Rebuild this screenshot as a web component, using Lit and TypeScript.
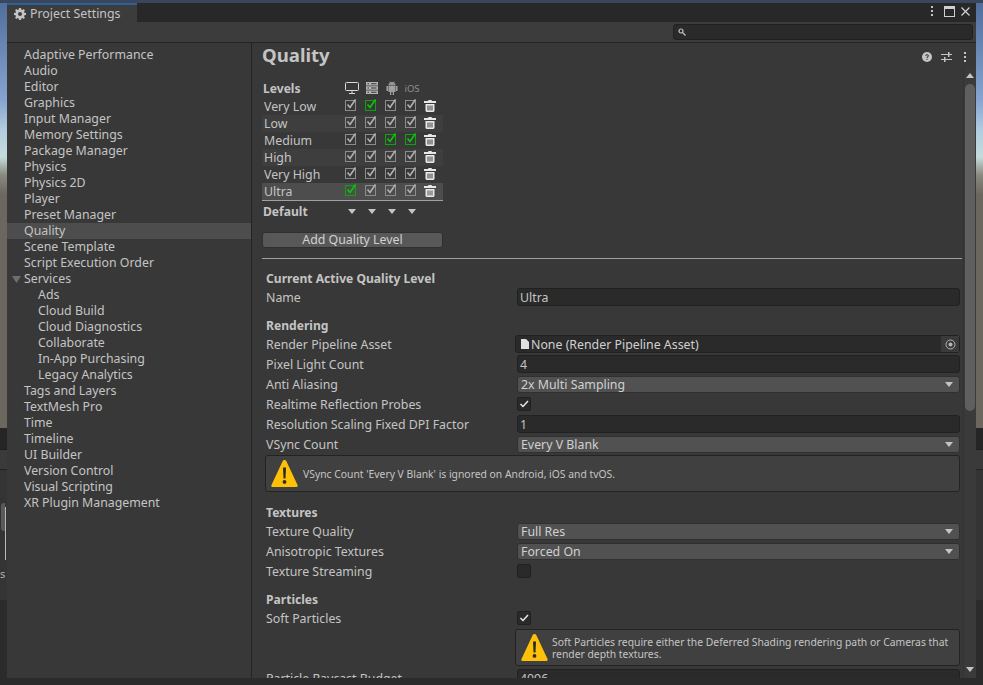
import { LitElement, html, css } from "lit";
import { customElement } from "lit/decorators.js";

const gear = html`<svg class="gear" viewBox="0 0 12 12" width="12" height="12"><path fill="#c4c4c4" fill-rule="evenodd" d="M5 0h2l.3 1.600 1 .4L9.700 1.100l1.200 1.200-.9 1.400.4 1 1.600.3v2l-1.600.3-.4 1 .9 1.400-1.200 1.200-1.400-.9-1 .4L7 12H5l-.3-1.600-1-.4-1.400.9-1.200-1.200.9-1.400-.4-1L0 7V5l1.600-.3.4-1-.9-1.400 1.200-1.200 1.400.9 1-.4zM6 4a2 2 0 1 0 0 4 2 2 0 0 0 0-4z"/></svg>`;

const dots = html`<svg viewBox="0 0 4 12" width="4" height="12"><g fill="#c4c4c4"><rect x="1" y="1" width="2" height="2"/><rect x="1" y="5" width="2" height="2"/><rect x="1" y="9" width="2" height="2"/></g></svg>`;

const check = (green: boolean) => html`<span class="lv-check ${green ? "green" : ""}"><svg viewBox="0 0 11 11" width="11" height="11"><path d="M2.500 5.500l2.500 3L10.500 .5" fill="none" stroke="${green ? "#0ec40e" : "#b0b0b0"}" stroke-width="1.600"/></svg></span>`;

const trash = html`<svg class="trash" viewBox="0 0 12 12" width="12" height="12"><path fill="#e8e8e8" fill-rule="evenodd" d="M4.500 0h3l.5 1h4v2H0V1h4zM1.500 4h9v7l-1 1h-7l-1-1zM3.500 5.500v5h1v-5zm2 0v5h1v-5zm2 0v5h1v-5z"/></svg>`;

const tri = html`<svg class="tri" viewBox="0 0 8 5" width="8" height="5"><path d="M0 0h8L4 5z" fill="#c4c4c4"/></svg>`;

const warn = html`<svg class="warn" viewBox="0 0 27 27" width="27" height="27"><path d="M13.500 0c1 0 1.500.5 2 1.500l11 23.500c.5 1 0 2-1 2H1.500c-1 0-1.500-1-1-2l11-23.500c.5-1 1-1.500 2-1.500z" fill="#ffc107"/><path d="M12 7.500h3l-.5 11h-2zM13.500 20a1.900 1.900 0 1 1 0 3.800 1.900 1.900 0 0 1 0-3.800z" fill="#2a2a2a"/></svg>`;

const levels: [string, number[]][] = [
  ["Very Low", [1]],
  ["Low", []],
  ["Medium", [2, 3]],
  ["High", []],
  ["Very High", []],
  ["Ultra", [0]],
];

const items: [string, boolean?][] = [
  ["Adaptive Performance"], ["Audio"], ["Editor"], ["Graphics"], ["Input Manager"],
  ["Memory Settings"], ["Package Manager"], ["Physics"], ["Physics 2D"], ["Player"],
  ["Preset Manager"], ["Quality"], ["Scene Template"], ["Script Execution Order"], ["Services"],
  ["Ads", true], ["Cloud Build", true], ["Cloud Diagnostics", true], ["Collaborate", true],
  ["In-App Purchasing", true], ["Legacy Analytics", true], ["Tags and Layers"], ["TextMesh Pro"],
  ["Time"], ["Timeline"], ["UI Builder"], ["Version Control"], ["Visual Scripting"], ["XR Plugin Management"],
];

@customElement("app-root")
export class AppRoot extends LitElement {
  static styles = css`
    :host {
      display: block; width: 983px; height: 685px; box-sizing: border-box; overflow: hidden; position: relative;
      padding: 3px 7px 7px 7px;
      background:
        linear-gradient(#39465c, #39465c) 0 0 / 100% 3px no-repeat,
        linear-gradient(#4f6c9a 0, #85a5d0 100px, #b0cce0 130px, #c5dcdc 157px, #8a8a80 175px, #6b665e 195px, #6b665e 428px, #252525 428px, #252525 449px, #1f1f1f 449px, #1f1f1f 450px, #3a3a3a 450px, #3a3a3a 469px, #232323 469px, #232323 470px, #343434 470px, #343434 600px, #2b2b2b 600px);
      font-family: "Noto Sans", sans-serif; font-size: 12.35px; color: #c4c4c4;
    }
    .bg-knob { position: absolute; left: 1px; top: 503px; width: 4px; height: 28px; background: #5a5a5a; border-radius: 3px 0 0 3px; }
    .bg-line { position: absolute; left: 5px; top: 507px; width: 1px; height: 53px; background: #b8b8b8; }
    .bg-text { position: absolute; left: 0; top: 566px; width: 7px; overflow: hidden; font-size: 11px; line-height: 16px; color: #b0b0b0; }
    .win { height: 675px; display: flex; flex-direction: column; background: #383838; overflow: hidden; position: relative; }
    .title { height: 19px; flex: none; background: #282828; display: flex; align-items: stretch; }
    .tab { width: 130px; box-sizing: border-box; background: #3c3c3c; border-top: 2px solid #2d6099; display: flex; align-items: center; gap: 4px; padding: 0 0 0 7px; }
    .spacer { flex: 1; }
    .tbtns { display: flex; align-items: center; gap: 10px; padding: 0 6px 3px 0; }
    .tbtns .close { margin-left: -4px; }
    .tool { height: 20px; flex: none; background: #3c3c3c; border-bottom: 1px solid #232323; display: flex; justify-content: flex-end; align-items: center; padding: 0 3px 0 0; }
    .search { width: 300px; height: 16px; box-sizing: border-box; background: #2a2a2a; border: 1px solid #212121; border-radius: 3px; display: flex; align-items: center; padding-left: 4px; }
    .body { flex: 1; display: flex; min-height: 0; }
    .list { width: 245px; box-sizing: border-box; flex: none; border-right: 1px solid #232323; padding-top: 4px; }
    .item { height: 16px; line-height: 16px; padding-left: 17px; position: relative; white-space: nowrap; }
    .item.sub { padding-left: 31px; }
    .item.sel { background: #4d4d4d; }
    .exp { position: absolute; left: 5px; top: 5px; }
    .pane { flex: 1; display: flex; flex-direction: column; min-width: 0; min-height: 0; }
    .head { height: 26px; flex: none; display: flex; align-items: center; padding: 0 9px 0 10px; }
    h1 { font-size: 18.6px; font-weight: 700; margin: 0 0 2px; flex: 1; color: #c4c4c4; line-height: 24px; }
    .hicons { display: flex; align-items: center; gap: 9px; margin-top: 1px; }
    .hicons .more { margin-left: 2px; display: flex; }
    .pbody { flex: 1; display: flex; min-height: 0; }
    .main { width: 711px; flex: none; padding: 0 0 0 10px; box-sizing: border-box; overflow: hidden; }
    .levels { width: 181px; margin-top: 10px; }
    .lv-row { height: 17px; display: flex; align-items: center; padding-left: 2px; }
    .lv-row.odd { background: #3e3e3e; }
    .lv-row.cur { background: #4d4d4d; }
    .lv-name { width: 76px; flex: none; }
    .lv-head { height: 19px; box-sizing: border-box; padding: 0 0 1px 1px; display: flex; align-items: center; font-weight: 700; font-size: 12.1px; }
    .lv-head .nm { width: 79px; flex: none; }
    .plat { width: 20px; flex: none; display: flex; justify-content: center; align-items: center; }
    .ios { font-size: 9.5px; color: #8f8f8f; font-weight: 400; }
    .lv-check { width: 20px; flex: none; display: flex; justify-content: center; position: relative; height: 11px; margin-bottom: 2px; }
    .lv-check::before { content: ""; width: 9px; height: 9px; border: 1px solid #8c8c8c; box-sizing: content-box; }
    .lv-check.green::before { border-color: #0aa50a; }
    .lv-check svg { position: absolute; left: 5px; top: -1px; }
    .trash { margin: 0 0 2px 4px; flex: none; }
    .lv-def { border-top: 1px solid #a0a0a0; height: 21px; display: flex; align-items: center; font-weight: 700; font-size: 12.1px; padding-left: 1px; }
    .lv-def .nm { width: 79px; flex: none; }
    .add { margin-top: 10px; width: 181px; height: 16px; box-sizing: border-box; background: #585858; border: 1px solid #303030; border-radius: 3px; text-align: center; line-height: 14px; color: #d0d0d0; }
    .sep { height: 1px; background: #a0a0a0; margin: 10px 0 0 0; width: 700px; }
    .sec { font-weight: 700; font-size: 12.1px; height: 17px; line-height: 17px; padding-left: 4px; white-space: nowrap; margin-top: 10px; }
    .sec.first { margin-top: 11px; }
    .sec.after-help { margin-top: 12px; }
    .row { height: 20px; display: flex; align-items: center; padding-left: 4px; white-space: nowrap; }
    .lab { width: 251px; flex: none; }
    .field { width: 443px; height: 18px; box-sizing: border-box; background: #2a2a2a; border: 1px solid #212121; border-radius: 3px; padding: 1px 0 0 2px; line-height: 16px; display: flex; align-items: center; }
    .drop { width: 443px; background: #515151; border: 1px solid #303030; border-radius: 3px; height: 17px; box-sizing: border-box; display: flex; align-items: center; padding: 0 6px 0 3px; color: #d0d0d0; }
    .drop span { flex: 1; }
    .lab.wide { width: 249px; }
    .field.obj { width: 445px; padding: 0 0 0 5px; gap: 2px; color: #d0d0d0; }
    .obj span { flex: 1; padding-top: 1px; }
    .pick { width: 18px; height: 16px; background: #3a3a3a; display: flex; align-items: center; justify-content: center; }
    .cb { width: 14px; height: 14px; box-sizing: border-box; background: #2a2a2a; border: 1px solid #212121; border-radius: 2px; display: flex; align-items: center; justify-content: center; }
    .help { box-sizing: border-box; background: #404040; border: 1px solid #232323; border-radius: 3px; height: 37px; display: flex; align-items: center; gap: 5px; padding: 0 4px 0 5px; font-size: 10.35px; line-height: 12px; white-space: normal; }
    .help.full { margin: 1px 0 0 3px; width: 695px; }
    .help.half { margin: 1px 0 2px 253px; width: 445px; gap: 4px; }
    .warn { flex: none; }
    .scroll { width: 13px; box-sizing: border-box; flex: none; background: #3a3a3a; border-left: 1px solid #333; display: flex; flex-direction: column; padding-left: 1px; }
    .thumb { width: 10px; height: 327px; background: #5f5f5f; border-radius: 5px; margin-top: 6px; flex: none; }
    .scroll .tri { flex: none; margin-left: 1px; }
    .up { transform: rotate(180deg); margin-top: 4px; }
    .dn { margin-top: auto; margin-bottom: 6px; }
  `;

  private drop(label: string, value: string) {
    return html`<div class="row"><div class="lab">${label}</div><div class="drop"><span>${value}</span>${tri}</div></div>`;
  }
  private field(label: string, value: string) {
    return html`<div class="row"><div class="lab">${label}</div><div class="field">${value}</div></div>`;
  }
  private cb(label: string, on: boolean) {
    return html`<div class="row"><div class="lab">${label}</div><div class="cb">${on ? html`<svg viewBox="0 0 10 10" width="10" height="10"><path d="M1.500 5l2.500 2.500L9 2" fill="none" stroke="#e8e8e8" stroke-width="1.500"/></svg>` : ""}</div></div>`;
  }

  render() {
    return html`<div class="bg-knob"></div><div class="bg-line"></div><div class="bg-text">s</div>
    <div class="win">
      <div class="title">
        <div class="tab">${gear}<span>Project Settings</span></div>
        <div class="spacer"></div>
        <div class="tbtns">
          ${dots}
          <svg viewBox="0 0 11 11" width="11" height="11"><rect x=".5" y=".5" width="10" height="10" fill="none" stroke="#d0d0d0"/><rect x="0" y="0" width="11" height="3" fill="#d0d0d0"/></svg>
          <svg class="close" viewBox="0 0 9 9" width="9" height="9"><path d="M.5.500l8 8M8.500.500l-8 8" stroke="#d0d0d0" stroke-width="1.200"/></svg>
        </div>
      </div>
      <div class="tool">
        <div class="search"><svg viewBox="0 0 8 8" width="8" height="8"><circle cx="3" cy="3" r="2" fill="none" stroke="#c4c4c4" stroke-width="1.200"/><path d="M4.500 4.500L7.500 7.500" stroke="#c4c4c4" stroke-width="1.200"/></svg></div>
      </div>
      <div class="body">
        <div class="list">
          ${items.map(([t, sub]) => html`<div class="item ${sub ? "sub" : ""} ${t === "Quality" ? "sel" : ""}">${t === "Services" ? html`<svg class="exp" viewBox="0 0 9 7" width="9" height="7"><path d="M0 0h9L4.500 7z" fill="#6e6e6e"/></svg>` : ""}${t}</div>`)}
        </div>
        <div class="pane">
          <div class="head">
            <h1>Quality</h1>
            <div class="hicons">
              <svg viewBox="0 0 10 10" width="10" height="10"><circle cx="5" cy="5" r="5" fill="#c4c4c4"/><path d="M3.300 3.900c0-1 .8-1.700 1.800-1.700s1.700.6 1.700 1.500c0 1.300-1.300 1.300-1.300 2.500H4.500c0-1.500 1.200-1.600 1.200-2.500 0-.4-.3-.6-.7-.6-.4 0-.7.3-.7.8zM4.500 6.900h1v1h-1z" fill="#383838"/></svg>
              <svg viewBox="0 0 11 10" width="11" height="10"><path d="M0 2.500h11M0 7.500h11" stroke="#c4c4c4"/><rect x="7" y="0" width="1.500" height="5" fill="#c4c4c4"/><rect x="3" y="5" width="1.500" height="5" fill="#c4c4c4"/></svg>
              <span class="more">${dots}</span>
            </div>
          </div>
          <div class="pbody">
            <div class="main">
              <div class="levels">
                <div class="lv-head"><span class="nm">Levels</span>
                  <span class="plat"><svg viewBox="0 0 14 12" width="14" height="12"><rect x=".5" y=".5" width="13" height="8" rx="1" fill="none" stroke="#d8d8d8"/><path d="M7 9v2M4 11.500h6" stroke="#d8d8d8"/></svg></span>
                  <span class="plat"><svg viewBox="0 0 12 12" width="12" height="12"><path fill="#b4b4b4" d="M0 0h12v3.400H0zM0 4.300h12v3.400H0zM0 8.600h12V12H0z"/><path fill="#383838" d="M1.500 1.200h1.500v1H1.500zM1.500 5.500h1.500v1H1.500zM1.500 9.800h1.500v1H1.500zM5 1.200h5.500v1H5zM5 5.500h5.500v1H5zM5 9.800h5.500v1H5z"/></svg></span>
                  <span class="plat"><svg viewBox="0 0 12 14" width="12" height="14"><path fill="#a0a0a0" d="M2.500 4.500a3.500 3.500 0 0 1 7 0zM2.500 5h7v6H8v3H6.700v-3H5.300v3H4v-3H2.500zM.5 5H2v5H.5zM10 5h1.500v5H10z"/><path d="M3.600 .3l1 1.600M8.400 .3l-1 1.600" stroke="#a0a0a0" stroke-width=".6"/><path fill="#383838" d="M4.200 2.700h.9v.9h-.9zM6.900 2.700h.9v.9h-.9z"/></svg></span>
                  <span class="plat ios">iOS</span>
                </div>
                ${levels.map(([name, greens], i) => html`<div class="lv-row ${i % 2 ? "odd" : ""} ${i === 5 ? "cur" : ""}">
                  <span class="lv-name">${name}</span>
                  ${[0, 1, 2, 3].map((c) => check(greens.includes(c)))}
                  ${trash}
                </div>`)}
                <div class="lv-def"><span class="nm">Default</span>${[0, 1, 2, 3].map(() => html`<span class="plat">${tri}</span>`)}</div>
                <div class="add">Add Quality Level</div>
              </div>
              <div class="sep"></div>
              <div class="sec first">Current Active Quality Level</div>
              ${this.field("Name", "Ultra")}
              <div class="sec">Rendering</div>
              <div class="row"><div class="lab wide">Render Pipeline Asset</div><div class="field obj">
                <svg viewBox="0 0 8 10" width="8" height="10"><path d="M0 0h5l3 3v7H0z" fill="#e0e0e0"/></svg><span>None (Render Pipeline Asset)</span>
                <div class="pick"><svg viewBox="0 0 11 11" width="11" height="11"><circle cx="5.500" cy="5.500" r="4.500" fill="none" stroke="#b4b4b4"/><circle cx="5.500" cy="5.500" r="2" fill="#b4b4b4"/></svg></div>
              </div></div>
              ${this.field("Pixel Light Count", "4")}
              ${this.drop("Anti Aliasing", "2x Multi Sampling")}
              ${this.cb("Realtime Reflection Probes", true)}
              ${this.field("Resolution Scaling Fixed DPI Factor", "1")}
              ${this.drop("VSync Count", "Every V Blank")}
              <div class="help full">${warn}<span>VSync Count 'Every V Blank' is ignored on Android, iOS and tvOS.</span></div>
              <div class="sec after-help">Textures</div>
              ${this.drop("Texture Quality", "Full Res")}
              ${this.drop("Anisotropic Textures", "Forced On")}
              ${this.cb("Texture Streaming", false)}
              <div class="sec">Particles</div>
              ${this.cb("Soft Particles", true)}
              <div class="help half">${warn}<span>Soft Particles require either the Deferred Shading rendering path or Cameras that render depth textures.</span></div>
              ${this.field("Particle Raycast Budget", "4096")}
            </div>
            <div class="scroll">
              <svg class="tri up" viewBox="0 0 8 5" width="8" height="5"><path d="M0 0h8L4 5z" fill="#c4c4c4"/></svg>
              <div class="thumb"></div>
              <svg class="tri dn" viewBox="0 0 8 5" width="8" height="5"><path d="M0 0h8L4 5z" fill="#c4c4c4"/></svg>
            </div>
          </div>
        </div>
      </div>
    </div>`;
  }
}
